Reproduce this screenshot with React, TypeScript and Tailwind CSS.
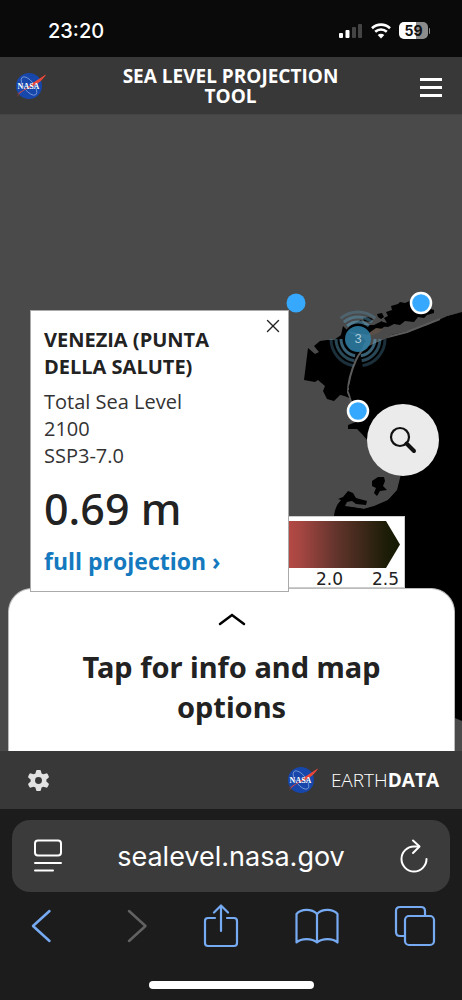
import { X } from "lucide-react";

function NasaLogo({ className }: { className?: string }) {
  return (
    <svg viewBox="0 0 36 30" className={className} role="img" aria-label="NASA">
      <circle cx="16" cy="15" r="13" fill="#1747ab" />
      <ellipse cx="16" cy="15" rx="5" ry="11" transform="rotate(-38 16 15)" fill="none" stroke="#8fa9dd" strokeWidth="0.7" />
      <path d="M1 24C9 21 19 13 33 3.500C29 10 24 13 20 15C13 18 8 20 4 26C6 21 12 18 19 14C13 18 7 22 1 24Z" fill="#e5483b" />
      <path d="M18 13L33 3.500C30 8 26 12 21 14Z" fill="#e5483b" />
      <text x="15.500" y="17.500" textAnchor="middle" fontSize="8" fontWeight="700" fill="#fff" fontFamily="Liberation Serif, serif">
        NASA
      </text>
    </svg>
  );
}

function StatusBar() {
  return (
    <div className="flex h-[57px] items-center justify-between bg-[#0a0a0a] pl-12 pr-8 pt-1 font-['Inter',sans-serif] text-white">
      <span className="text-xl font-medium">23:20</span>
      <div className="flex items-center gap-2">
        <svg viewBox="0 0 24 16" className="h-4 w-6" aria-hidden="true">
          <rect x="0" y="10" width="4" height="5" rx="1" fill="#fff" />
          <rect x="6.500" y="7" width="4" height="8" rx="1" fill="#fff" />
          <rect x="13" y="4" width="4" height="11" rx="1" fill="#444" />
          <rect x="19" y="1" width="4" height="14" rx="1" fill="#444" />
        </svg>
        <svg viewBox="0 0 20 16" className="h-4 w-5" aria-hidden="true" fill="none" stroke="#fff" strokeWidth="2.600">
          <path d="M1 5.200C6 .4 14 .4 19 5.200" />
          <path d="M4.200 8.700C7.500 5.700 12.500 5.700 15.800 8.700" />
          <path d="M10 15.500L6.700 11.900C8.500 10.200 11.500 10.200 13.300 11.900Z" fill="#fff" stroke="none" />
        </svg>
        <div className="flex items-center gap-px">
          <span className="flex h-[17px] w-[29px] items-center justify-center rounded-[5px] bg-linear-to-r from-white from-59% to-[#8c8c8c] to-59% text-sm font-bold text-[#111]">
            59
          </span>
          <span className="h-1.5 w-px rounded-r bg-[#8c8c8c]" />
        </div>
      </div>
    </div>
  );
}

function Header() {
  return (
    <header className="flex h-[58px] items-center justify-between border-b border-[#454545] bg-[#383838] pl-[13px] pr-5 text-white">
      <a href="#home" className="w-9">
        <NasaLogo className="h-[30px] w-9" />
      </a>
      <h1 className="mr-2 w-60 text-center text-[19px]/5 font-bold">SEA LEVEL PROJECTION TOOL</h1>
      <button aria-label="Menu" className="flex w-[22px] flex-col gap-[5px] pt-1">
        <span className="h-[3px] w-full bg-white" />
        <span className="h-[3px] w-full bg-white" />
        <span className="h-[3px] w-full bg-white" />
      </button>
    </header>
  );
}

function SeaMap() {
  return (
    <svg viewBox="0 115 462 636" preserveAspectRatio="xMinYMin slice" className="absolute inset-0 h-full w-full" role="img" aria-label="Map of the Venice lagoon">
      {/* open sea and the lagoon */}
      <path d="M462 312L447 316L427 325L407 331L390 335L379 341L369 345L363 338L350 333L343 326L341 335L334 340L327 340L320 341L314 346L319 352L315 354L308 348L307 356L304 380L315 382L318 380L325 386L323 391L327 399L334 401L340 395L348 396L351 402L356 422L348 425L348 429L357 429L362 434L367 440L380 460L399 477L397 488L390 498L375 505L364 509L350 507L340 508L335 516V751H455V718L462 721Z" fill="#000" />
      {/* islands of the upper lagoon */}
      <path d="M386 312L392 310L391 306L398 304L400 302L405 303L412 300L417 302L418 308L428 308L434 310V313L427 315L424 318L418 317L414 322L405 321L400 325L394 324L388 327L378 326L383 322L387 323L384 318L388 316Z" fill="#000" />
      <path d="M377 314L382 313L384 317L381 319L378 317ZM363 318L368 317L373 319L370 322L364 321Z" fill="#000" />
      <path d="M345 331L351 325L361 320L365 325L374 325L382 321L385 326L379 331L371 335L363 334Z" fill="#000" />
      {/* barrier islands */}
      <path d="M462 312L447 316L427 325L407 331L390 335L379 341L377 336L388 327L405 326L427 319Z" fill="#4a4a4a" />
      <path d="M440 319L407 332L384 338L368 345Q360 351 356 360Q348 378 348 392L352 405" fill="none" stroke="#5b5b5b" strokeWidth="2" />
      <path d="M376 334L387 328L397 330L389 337L373 343L366 347L361 352L364 343Z" fill="#4a4a4a" />
      <path d="M369 333L376 328L384 329L376 334L369 336Z" fill="#5b5048" />
      <path d="M342 388L346 395L336 391M349 386L354 388L349 392" stroke="#000" strokeWidth="3" />
      {/* river mouth in the south */}
      <path d="M390 470L401 474L397 490L388 500L374 506L366 508L352 506L337 510L333 516L320 516L320 470Z" fill="#4a4a4a" />
      <path d="M372 481L378 477L384 477L385 481L383 486L387 490L380 491L377 496L374 493L376 488L372 486Z" fill="#000" />
      <path d="M338 499L343 497L348 491L353 493L356 498L367 501L366 505L356 504L352 501L347 502L345 506L352 507L364 509L377 507L387 501L398 490V516H334Q335 506 341 500Z" fill="#000" />
      {/* station cluster */}
      <g fill="none" stroke="#5ba0c2" strokeWidth="3">
        <circle cx="358" cy="339" r="17" pathLength="360" strokeDasharray="80 20 80 50 80 50" strokeOpacity="0.6" />
        <circle cx="358" cy="339" r="22" pathLength="360" strokeDasharray="80 20 80 50 80 50" strokeOpacity="0.45" />
        <circle cx="358" cy="339" r="27" pathLength="360" strokeDasharray="80 20 80 50 80 50" strokeOpacity="0.3" />
      </g>
      <circle cx="358" cy="339" r="13" fill="#2f83ac" fillOpacity="0.85" />
      <text x="358" y="343" textAnchor="middle" fontSize="13" fill="#a9c7d6" fontFamily="Liberation Sans, sans-serif">3</text>
      <circle cx="296" cy="303" r="9.500" fill="#36a9ff" />
      <circle cx="421" cy="303" r="10" fill="#36a9ff" stroke="#fff" strokeWidth="2.500" />
      <circle cx="358" cy="411" r="10" fill="#36a9ff" stroke="#fff" strokeWidth="2.500" />
    </svg>
  );
}

function Legend() {
  return (
    <div className="absolute bottom-[163px] left-[280px] h-[72px] w-[125px] border border-[#ccc] bg-white pt-[3px]">
      <svg viewBox="0 0 124 49" className="h-[49px] w-[124px]" aria-hidden="true">
        <defs>
          <linearGradient id="rise">
            <stop offset="0" stopColor="#bd4a45" />
            <stop offset="0.160" stopColor="#a64642" />
            <stop offset="0.450" stopColor="#65352d" />
            <stop offset="0.880" stopColor="#1d1d08" />
            <stop offset="1" stopColor="#151a02" />
          </linearGradient>
        </defs>
        <path d="M0 1H105L119 24.500L105 48H0Z" fill="url(#rise)" />
      </svg>
      <div className="flex justify-end gap-[29px] pr-[5px] font-['DejaVu_Sans',sans-serif] text-[17px]/5 text-[#222]">
        <span>2.0</span>
        <span>2.5</span>
      </div>
    </div>
  );
}

function StationCard() {
  return (
    <article className="absolute left-[30px] top-[195px] w-[259px] border border-[#aaa] bg-white px-[13px] pb-3.5 pt-[15px] text-[#222]">
      <button aria-label="Close" className="absolute right-1 top-1">
        <X className="h-[22px] w-[22px]" strokeWidth={1.5} />
      </button>
      <h2 className="w-52 text-xl/[27px] font-bold">VENEZIA (PUNTA DELLA SALUTE)</h2>
      <div className="mt-2 text-xl/[27px] text-[#333]">
        <p>Total Sea Level</p>
        <p>2100</p>
        <p>SSP3-7.0</p>
      </div>
      <p className="mt-3 font-['Noto_Sans',sans-serif] text-[43px]/[56px] font-medium">0.69 m</p>
      <a href="#projection" className="mt-2 block text-[23px]/8 font-bold text-[#1479be]">full projection ›</a>
    </article>
  );
}

function Sheet() {
  return (
    <button className="relative ml-2 mr-[7px] flex h-[163px] flex-col items-center rounded-t-3xl border border-b-0 border-[#bbb] bg-white pt-6 text-[#222]">
      <svg viewBox="0 0 28 13" className="h-[13px] w-7" fill="none" stroke="#000" strokeWidth="2.500" strokeLinecap="round" aria-hidden="true">
        <path d="M2 11L14 2L26 11" />
      </svg>
      <span className="mt-[21px] max-w-80 font-['Noto_Sans',sans-serif] text-[29px]/10 font-bold">Tap for info and map options</span>
    </button>
  );
}

function Footer() {
  return (
    <footer className="flex h-[58px] items-center justify-between bg-[#383838] pl-[27px] pr-[23px] text-white">
      <button aria-label="Settings">
        <svg viewBox="0 0 24 24" className="h-[23px] w-[23px]" aria-hidden="true">
          <path d="M9.500 2Q9.500 1 10.500 1H13.500Q14.500 1 14.500 2L15.200 4.600L17 5.600L20 4.600Q21 4.400 21.500 5.200L22.700 7.600Q23 8.500 22.500 9L20.200 11V13L22.500 15Q23 15.500 22.700 16.400L21.500 18.800Q21 19.600 20 19.400L17 18.400L15.200 19.400L14.500 22Q14.500 23 13.500 23H10.500Q9.500 23 9.500 22L8.800 19.400L7 18.400L4 19.400Q3 19.600 2.500 18.800L1.300 16.400Q1 15.500 1.500 15L3.800 13V11L1.500 9Q1 8.500 1.300 7.600L2.500 5.200Q3 4.400 4 4.600L7 5.600L8.800 4.600Z" fill="#e2e2e2" />
          <circle cx="12" cy="12" r="3.600" fill="#383838" />
        </svg>
      </button>
      <a href="#earthdata" className="flex items-center gap-2.5">
        <NasaLogo className="h-[30px] w-9" />
        <span className="text-[19px] font-light">
          EARTH<b className="font-bold">DATA</b>
        </span>
      </a>
    </footer>
  );
}

function BrowserBar() {
  return (
    <div className="bg-[#1c1c1c] px-3 pb-[11px] pt-[11px]">
      <div className="flex h-[72px] items-center rounded-[18px] bg-[#3b3b3b] px-[22px] text-white">
        <button aria-label="Page menu">
          <svg viewBox="0 0 28 34" className="h-[34px] w-7" fill="none" stroke="#fff" strokeWidth="2" strokeLinecap="round">
            <rect x="1" y="1.500" width="26" height="15" rx="3" />
            <path d="M1 24H27M1 31.500H19" />
          </svg>
        </button>
        <input
          type="text"
          aria-label="Address"
          defaultValue="sealevel.nasa.gov"
          className="min-w-0 flex-1 bg-transparent pt-0.5 text-center font-['Inter',sans-serif] text-[27px]/8 outline-none"
        />
        <button aria-label="Reload">
          <svg viewBox="0 0 28 34" className="h-[34px] w-7" fill="none" stroke="#fff" strokeWidth="2" strokeLinecap="round" strokeLinejoin="round">
            <path d="M19 7.500H14A12.500 12.500 0 1 0 26.500 20" />
            <path d="M13 1.500L19.500 7.500L13 14" />
          </svg>
        </button>
      </div>
      <nav className="flex h-[68px] items-center justify-between pl-[18px] pr-3.5 text-[#76aaf2]">
        <button aria-label="Back">
          <svg viewBox="0 0 22 34" className="h-[34px] w-[22px]" fill="none" stroke="currentColor" strokeWidth="2.500" strokeLinecap="round" strokeLinejoin="round">
            <path d="M19.500 2L3 17L19.500 32" />
          </svg>
        </button>
        <button aria-label="Forward" className="ml-[18px] text-[#626262]" disabled>
          <svg viewBox="0 0 22 34" className="h-[34px] w-[22px]" fill="none" stroke="currentColor" strokeWidth="2.500" strokeLinecap="round" strokeLinejoin="round">
            <path d="M3 2L19.500 17L3 32" />
          </svg>
        </button>
        <button aria-label="Share">
          <svg viewBox="0 0 36 44" className="h-11 w-9" fill="none" stroke="currentColor" strokeWidth="2.200" strokeLinecap="round" strokeLinejoin="round">
            <path d="M12 14H5Q2 14 2 17V39Q2 42 5 42H31Q34 42 34 39V17Q34 14 31 14H24" />
            <path d="M18 27V2M11 8.500L18 1.500L25 8.500" />
          </svg>
        </button>
        <button aria-label="Bookmarks">
          <svg viewBox="0 0 44 36" className="h-9 w-11" fill="none" stroke="currentColor" strokeWidth="2.200" strokeLinejoin="round">
            <path d="M22 6C17 .5 6 .5 1.500 6V34.500C6 30 17 30 22 34.500C27 30 38 30 42.500 34.500V6C38 .5 27 .5 22 6Z" />
            <path d="M22 6V34.500" />
          </svg>
        </button>
        <button aria-label="Tabs">
          <svg viewBox="0 0 42 42" className="h-[42px] w-[42px]" fill="none" stroke="currentColor" strokeWidth="2.200">
            <rect x="11" y="11" width="29" height="29" rx="4" />
            <path d="M11 31H6Q2 31 2 27V6Q2 2 6 2H27Q31 2 31 6V11" />
          </svg>
        </button>
      </nav>
      <div className="mx-auto mt-[21px] h-2 w-[165px] rounded-full bg-white" />
    </div>
  );
}

export default function App() {
  return (
    <div className="flex min-h-screen flex-col bg-[#1c1c1c] font-['Open_Sans','Noto_Sans',sans-serif]">
      <StatusBar />
      <Header />
      <main className="relative flex min-h-[636px] flex-1 flex-col justify-end overflow-hidden bg-[#4a4a4a]">
        <SeaMap />
        <Legend />
        <Sheet />
        <StationCard />
        <button aria-label="Search" className="absolute right-[23px] top-[289px] flex h-[72px] w-[72px] items-center justify-center rounded-full bg-[#ebebeb]">
          <svg viewBox="0 0 28 28" className="h-7 w-7" fill="none" stroke="#111" strokeLinecap="round">
            <circle cx="11" cy="11" r="9" strokeWidth="2.200" />
            <path d="M17.500 17.500L25 25" strokeWidth="4" />
          </svg>
        </button>
      </main>
      <Footer />
      <BrowserBar />
    </div>
  );
}
